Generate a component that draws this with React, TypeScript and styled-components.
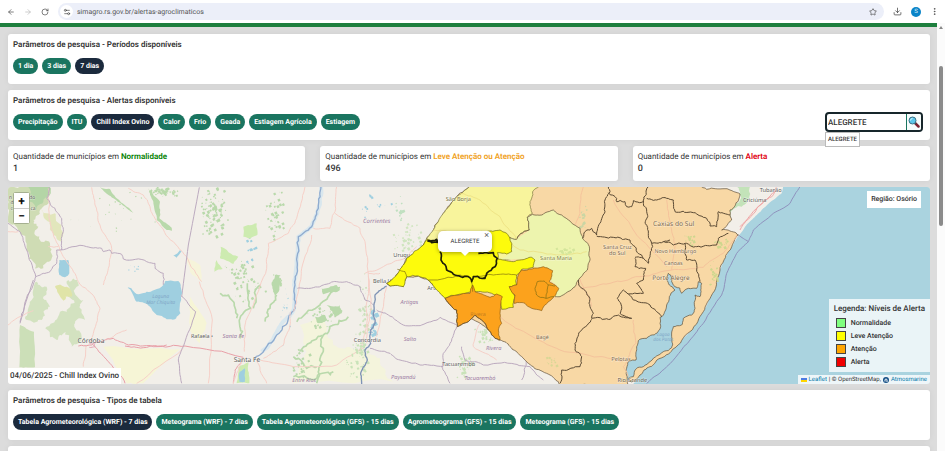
import React, { useState } from "react";
import styled, { createGlobalStyle, css } from "styled-components";
import { ArrowLeft, ArrowRight, RotateCw, Star, Download, EllipsisVertical, Settings2 } from "lucide-react";

const GlobalStyle = createGlobalStyle`
  * { box-sizing: border-box; }
  body { margin: 0; font-family: Roboto, "Liberation Sans", sans-serif; color: #333; background: #dcdcdc; overflow: hidden; text-rendering: geometricPrecision; }
  button, input { font-family: inherit; text-rendering: inherit; }
`;

const Window = styled.div`
  display: flex;
  flex-direction: column;
  height: 100vh;
  overflow: hidden;
`;

const BrowserBar = styled.header`
  display: flex;
  align-items: center;
  gap: 9px;
  flex: none;
  height: 23px;
  padding: 0 6px 0 7px;
  background: #fff;
  color: #444;
`;

const BarButton = styled.button<{ $dim?: boolean }>`
  display: flex;
  padding: 0;
  border: 0;
  background: none;
  color: ${(p) => (p.$dim ? "#b5b5b5" : "#444")};
`;

const AddressBar = styled.div`
  display: flex;
  flex: 1;
  align-items: center;
  gap: 4px;
  height: 17px;
  padding: 0 7px 0 2px;
  border-radius: 9px;
  background: #eceff9;
`;

const SiteInfo = styled.span`
  display: flex;
  align-items: center;
  justify-content: center;
  width: 13px;
  height: 13px;
  border-radius: 50%;
  background: #fff;
`;

const AddressInput = styled.input`
  flex: 1;
  min-width: 0;
  padding: 0;
  border: 0;
  outline: 0;
  background: none;
  color: #555;
  font-size: 7px;
`;

const Avatar = styled.span`
  display: flex;
  align-items: center;
  justify-content: center;
  width: 10px;
  height: 10px;
  border-radius: 50%;
  background: #0a84c8;
  color: #d5ecf8;
  font-size: 6px;
`;

const Viewport = styled.div`
  display: flex;
  flex: 1;
  min-height: 0;
`;

const Page = styled.main`
  display: flex;
  flex: 1;
  flex-direction: column;
  min-width: 0;
  overflow: hidden;
  border-top: 4px solid #1e7f3e;
`;

const Content = styled.div`
  display: flex;
  flex-direction: column;
  gap: 6px;
  padding: 7px 7px 0 8px;
`;

const Scrollbar = styled.div`
  display: flex;
  flex-direction: column;
  align-items: center;
  flex: none;
  width: 8px;
  padding-top: 3px;
  background: #fbfbfb;
`;

const ScrollArrow = styled.span`
  border: 2px solid transparent;
  border-top: 0;
  border-bottom: 3px solid #888;
`;

const ScrollThumb = styled.span`
  width: 4px;
  height: 160px;
  margin-top: 37px;
  border-radius: 2px;
  background: #8b8b8b;
`;

const panel = css`
  border-radius: 3px;
  background: #fff;
  box-shadow: 0 0 6px rgba(0, 0, 0, 0.06);
`;

const Card = styled.section`
  ${panel}
  display: flex;
  flex: none;
  flex-direction: column;
  gap: 7px;
  padding: 5px 7px 10px 5px;
`;

const Heading = styled.h2`
  margin: 0;
  font-size: 8px;
  font-weight: 600;
  line-height: 12px;
`;

const Row = styled.div`
  display: flex;
  align-items: center;
  justify-content: space-between;
  height: 16px;
`;

const PillGroup = styled.div`
  display: flex;
  gap: 4px;
`;

const Pill = styled.button<{ $active: boolean }>`
  height: 16px;
  padding: 0 5px;
  border: 0;
  border-radius: 8px;
  background: ${(p) => (p.$active ? "#1b2a3d" : "#1a7560")};
  color: #fff;
  font-size: 7px;
  font-weight: 700;
  line-height: 16px;
  white-space: nowrap;
`;

const Search = styled.div`
  position: relative;
  display: flex;
  width: 98px;
  height: 20px;
  border: 2px solid #17262b;
  border-radius: 4px;
  background: #fff;
`;

const SearchInput = styled.input`
  flex: 1;
  min-width: 0;
  padding: 0 1px;
  border: 0;
  outline: 0;
  background: none;
  color: #333;
  font-size: 8px;
  font-weight: 500;
`;

const SearchButton = styled.button`
  display: flex;
  align-items: center;
  justify-content: center;
  width: 15px;
  padding: 0;
  border: 0;
  border-left: 1px solid #1a7560;
  background: #f6fdfc;
  border-radius: 0 2px 2px 0;
`;

const Suggestion = styled.button`
  position: absolute;
  z-index: 2;
  top: 18px;
  left: -2px;
  height: 15px;
  padding: 0 2px;
  border: 1px solid #bbb;
  background: #fff;
  color: #333;
  font-size: 6px;
  font-weight: 500;
`;

const Stats = styled.div`
  display: grid;
  flex: none;
  grid-template-columns: repeat(3, 1fr);
  gap: 15px;
`;

const StatCard = styled.section`
  ${panel}
  padding: 5px 5px 6px;
`;

const StatLabel = styled.p`
  margin: 0;
  font-size: 8px;
  line-height: 12px;
  white-space: nowrap;
`;

const Level = styled.strong<{ $color: string }>`
  color: ${(p) => p.$color};
  font-weight: 600;
`;

const StatValue = styled.p`
  margin: 0;
  font-size: 9px;
  font-weight: 500;
  line-height: 12px;
`;

const MapFrame = styled.section`
  position: relative;
  flex: none;
  height: 197px;
  overflow: hidden;
  border-radius: 3px;
  background: #f2efe9;
`;

const MapDrawing = styled.svg`
  display: block;
  width: 100%;
  height: 100%;
`;

const ZoomControl = styled.div`
  position: absolute;
  top: 6px;
  left: 6px;
  display: flex;
  flex-direction: column;
  border-radius: 2px;
  box-shadow: 0 0 0 1px rgba(0, 0, 0, 0.2);
`;

const ZoomButton = styled.button`
  width: 15px;
  height: 15px;
  padding: 0;
  border: 0;
  background: #fff;
  color: #111;
  font-size: 12px;
  font-weight: 700;
  line-height: 14px;

  & + & { border-top: 1px solid #ccc; }
`;

const Popup = styled.div`
  position: absolute;
  top: 44px;
  left: 430px;
  display: flex;
  align-items: center;
  justify-content: center;
  width: 54px;
  height: 21px;
  border-radius: 5px;
  background: #fff;
  box-shadow: 0 1px 4px rgba(0, 0, 0, 0.35);
  font-size: 6px;

  &::after {
    content: "";
    position: absolute;
    top: 100%;
    border: 4px solid transparent;
    border-top-color: #fff;
    border-bottom: 0;
  }
`;

const PopupClose = styled.button`
  position: absolute;
  top: 1px;
  right: 3px;
  padding: 0;
  border: 0;
  background: none;
  color: #666;
  font-size: 9px;
  line-height: 9px;
`;

const MapTag = styled.div<{ $corner: "region" | "date" }>`
  position: absolute;
  background: #fff;
  font-weight: 500;
  white-space: nowrap;
  ${(p) =>
    p.$corner === "region"
      ? css`top: 4px; right: 9px; padding: 0 4px; font-size: 7px; line-height: 17px;`
      : css`bottom: 0; left: 0; padding: 0 2px; font-size: 8px; line-height: 16px;`}
`;

const Legend = styled.aside`
  position: absolute;
  right: 0;
  bottom: 12px;
  padding: 4px 5px 4px;
  background: rgba(255, 255, 255, 0.75);
`;

const LegendTitle = styled.h3`
  margin: 0 0 1px;
  font-size: 8px;
  font-weight: 500;
  line-height: 12px;
`;

const LegendItem = styled.div`
  display: flex;
  align-items: center;
  gap: 5px;
  height: 13px;
  padding-left: 2px;
  font-size: 7px;
  font-weight: 500;
`;

const Swatch = styled.span<{ $color: string }>`
  width: 10px;
  height: 10px;
  border: 1px solid #444;
  background: ${(p) => p.$color};
`;

const Attribution = styled.footer`
  position: absolute;
  right: 0;
  bottom: 0;
  display: flex;
  align-items: center;
  gap: 2px;
  height: 9px;
  padding: 0 3px;
  background: rgba(255, 255, 255, 0.8);
  font-size: 6px;
  white-space: nowrap;

  a { color: #0078a8; text-decoration: none; }
`;

/* ---- map geometry ---- */

type Point = [number, number];

const parse = (s: string): Point[] => s.trim().split(/\s+/).map((p) => p.split(",").map(Number) as Point);

const hash = (a: number, b: number) => {
  const v = Math.sin(a * 12.9898 + b * 78.233) * 43758.5453;
  return v - Math.floor(v) - 0.5;
};

/* Subdivides a line and nudges the middle points so it reads as a surveyed border. */
const roughen = (s: string, amp: number, close = false) => {
  const pts = parse(s);
  if (close) pts.push(pts[0]);
  const split = (a: Point, b: Point, depth: number): Point[] => {
    const len = Math.hypot(b[0] - a[0], b[1] - a[1]);
    if (depth === 0 || len < 8) return [b];
    const k = amp * Math.min(1, len / 30);
    const m: Point = [
      (a[0] + b[0]) / 2 + hash(a[0] + b[0], a[1] + b[1]) * k,
      (a[1] + b[1]) / 2 + hash(a[1] + b[1], a[0] + b[0]) * k,
    ];
    return [...split(a, m, depth - 1), ...split(m, b, depth - 1)];
  };
  const out: Point[] = [pts[0]];
  for (let i = 1; i < pts.length; i++) out.push(...split(pts[i - 1], pts[i], 3));
  return "M" + out.map(([x, y]) => `${x.toFixed(1)} ${y.toFixed(1)}`).join("L") + (close ? "Z" : "");
};

const Area = ({ d, fill, amp = 6, stroke, width = 3 }: { d: string; fill: string; amp?: number; stroke?: string; width?: number }) => (
  <path d={roughen(d, amp, true)} fill={fill} stroke={stroke} strokeWidth={stroke ? width : undefined} />
);

const Lines = ({ list, stroke, width = 3, amp = 6, opacity }: { list: string[]; stroke: string; width?: number; amp?: number; opacity?: number }) => (
  <g fill="none" stroke={stroke} strokeWidth={width} strokeLinejoin="round" opacity={opacity}>
    {list.map((d) => (
      <path key={d} d={roughen(d, amp)} />
    ))}
  </g>
);

const Specks = ({ x, y, rx, ry, n, fill, size = 6 }: { x: number; y: number; rx: number; ry: number; n: number; fill: string; size?: number }) => (
  <g fill={fill}>
    {Array.from({ length: n }, (_, i) => {
      const px = x + (hash(i, x) + hash(i + 9, y)) * rx;
      const py = y + (hash(i + 3, y) + hash(i + 5, x)) * ry;
      const r = size * (0.7 + hash(i, i + y));
      return <path key={i} d={`M${px} ${py}l${r} ${-r / 2}l${r / 2} ${r}l${-r} ${r / 2}z`} />;
    })}
  </g>
);

const WATER = "#aad3df";
const LAKE = "#9fcfe0";
const WOOD = "#b9d9ab";
const GRASS = "#cdebb0";
const ROAD = "#f6d0c8";
const MAIN_ROAD = "#e9a0a8";
const BORDER = "#bcaabf";
const DISTRICT = "#5b4a34";
const TAN = "#f8d8a5";
const YELLOW = "#fdfb0c";
const ORANGE = "#fca21c";

const CityLabel = styled.text`
  font-family: "Noto Sans", "Open Sans", sans-serif;
  text-anchor: middle;
  paint-order: stroke;
`;

const City = ({ x, y, size = 18, fill = "#5a5a5a", children }: { x: number; y: number; size?: number; fill?: string; children: string }) => (
  <CityLabel x={x} y={y} fontSize={size} fill={fill} stroke="rgba(255,255,255,.45)" strokeWidth={3}>
    {children}
  </CityLabel>
);

const Province = ({ x, y, size = 18, fill = "#9b7ba3", children }: { x: number; y: number; size?: number; fill?: string; children: string }) => (
  <CityLabel x={x} y={y} fontSize={size} fill={fill} fontStyle="italic">
    {children}
  </CityLabel>
);

const NorthWest = () => (
  <g transform="translate(0 405)">
    <Area fill="#cfdcb4" amp={16} d="24,157 150,157 140,180 140,210 120,225 115,240 100,255 115,275 105,300 150,325 155,370 130,400 105,400 85,350 60,290 24,260" />
    <Area fill="#b4d5a6" amp={14} d="85,157 150,157 130,200 110,225 90,200" />
    <Area fill="#e2e6bc" amp={14} d="125,222 165,235 188,290 185,320 160,300 150,262" />
    <Area fill={LAKE} d="178,375 205,375 208,415 195,427 178,420" />
    <Area fill={LAKE} d="520,362 540,345 545,350 530,368" />
    <Area fill={WOOD} d="300,157 330,162 350,190 400,234 375,215 340,190" />
    <Area fill={WOOD} d="445,160 480,200 478,250 515,278 515,288 500,285 470,255 460,200" />
    <Area fill={GRASS} d="662,335 715,365 700,387 660,370" />
    <Area fill={GRASS} d="730,275 770,265 772,300 750,312 730,305" />
    <Area fill={GRASS} d="650,375 668,402 643,410" />
    <Area fill="#f6f4da" d="560,365 600,390 605,440 570,410" />
    <Specks x={640} y={235} rx={42} ry={85} n={110} fill={WOOD} />
    <Specks x={820} y={240} rx={30} ry={80} n={44} fill={WOOD} />
    <Specks x={490} y={170} rx={50} ry={16} n={50} fill={WOOD} />
    <Specks x={715} y={405} rx={50} ry={40} n={30} fill={WOOD} />
    <Specks x={830} y={435} rx={20} ry={18} n={20} fill={WOOD} />
    <Specks x={750} y={350} rx={20} ry={50} n={12} fill={LAKE} />
    <Specks x={350} y={240} rx={180} ry={80} n={20} fill={WOOD} size={3} />
    <Specks x={400} y={400} rx={20} ry={50} n={8} fill={LAKE} size={3} />
    <Lines
      stroke={ROAD}
      list={[
        "275,157 285,210 300,270 335,340 325,400 310,450",
        "385,160 430,180 450,215 470,260 520,320 560,365 605,440",
        "145,160 150,260 175,330 200,380 235,440",
        "24,290 55,290",
        "145,335 175,335",
      ]}
    />
    <Lines
      stroke={BORDER}
      list={[
        "24,265 60,290 85,360 107,425 150,410 170,385 170,345 250,332 305,340 310,350 330,345 335,355 365,358 370,372 440,380 465,385 465,400 490,415 490,450",
        "148,157 140,190 165,220 185,250 190,290 185,345",
        "107,425 90,470 60,560",
      ]}
    />
    <Lines stroke={BORDER} amp={0} list={["598,157 565,330 545,485"]} />
    <City x={32} y={191} size={15}>n</City>
    <City x={97} y={191} size={15}>do</City>
    <City x={36} y={208} size={15}>d</City>
    <City x={35} y={225} size={12}>C</City>
    <City x={99} y={225} size={15}>ca</City>
  </g>
);

const Cordoba = () => (
  <g transform="translate(0 840)">
    <Area fill="#f6f5d6" d="310,200 540,208 430,310 380,310" />
    <Area fill="#f6f5d6" d="570,50 620,130 600,190 570,150" />
    <Area fill="#ccdfb8" amp={4} d="60,135 102,155 105,262 58,262" />
    <Area fill="#d3e2c0" amp={18} d="75,115 125,120 135,90 150,80 130,50 140,20 110,5 95,60" />
    <Area fill="#d3e2c0" amp={22} d="140,140 150,172 180,165 200,150 215,200 235,190 225,130 255,120 250,60 230,20 225,0 205,0 200,40 220,60 180,95" />
    <Area fill="#e0e4a8" amp={14} d="165,20 200,20 215,50 190,62" />
    <Area fill={LAKE} amp={8} d="383,22 410,42 440,35 490,15 495,4 535,3 542,20 541,100 525,118 500,118 470,105 450,80 435,70 410,65" />
    <Lines stroke={ROAD} list={["235,5 285,55 300,85 280,160 270,190", "24,135 60,110 100,92", "258,195 250,260", "598,5 637,120 625,310", "550,205 410,310", "320,180 345,165 380,150"]} />
    <Lines stroke={MAIN_ROAD} list={["235,198 275,195 340,175 385,195 460,200 555,198 730,232", "375,198 430,203 500,195", "280,195 330,250 375,310", "730,235 705,270 700,310"]} />
    <Lines stroke={BORDER} amp={3} list={["100,0 60,130", "545,48 587,95 550,200 535,240 545,310"]} />
    <Lines stroke="#e3a5b5" list={["268,190 282,190 285,200 268,202"]} />
    <Province x={482} y={54} size={15} fill="#7fa6c6">Laguna</Province>
    <Province x={482} y={72} size={15} fill="#7fa6c6">Mar Chiquita</Province>
    <City x={273} y={188} size={20}>Córdoba</City>
    <City x={606} y={174} size={16}>Rafaela •</City>
  </g>
);

const SantaFe = () => (
  <g transform="translate(480 555)">
    <Area fill="#f4f4dc" amp={14} d="420,420 480,400 520,480 600,500 660,520 700,590 400,595 440,500" />
    <Area fill={GRASS} d="235,545 265,530 268,595 230,595" />
    <Area fill={LAKE} d="240,560 255,550 255,590 238,590" />
    <Lines stroke={WOOD} width={5} amp={16} list={["470,595 480,520 490,450 520,420 565,395", "410,410 480,360 540,308", "262,295 272,370 240,400 240,460", "180,325 205,330 230,400", "300,300 280,370", "350,330 330,370 315,410", "400,515 440,550 470,545", "400,575 470,580 520,560", "485,450 440,480 420,500"]} />
    <Area fill={WOOD} amp={10} d="345,270 362,270 358,310 345,335 335,300" />
    <Area fill={WOOD} amp={12} d="500,360 540,360 545,385 525,395" />
    <Area fill={WOOD} amp={12} d="485,310 530,300 540,315 490,328" />
    <Area fill={WOOD} amp={12} d="465,395 495,390 495,410 475,415" />
    <Specks x={480} y={395} rx={50} ry={40} n={30} fill={WOOD} />
    <Specks x={420} y={540} rx={40} ry={50} n={30} fill={WOOD} />
    <Specks x={265} y={310} rx={60} ry={50} n={24} fill={WOOD} />
    <Specks x={610} y={400} rx={20} ry={140} n={50} fill="#c9e1bb" />
    <Specks x={375} y={370} rx={20} ry={120} n={24} fill={LAKE} size={3} />
    <Lines stroke="#d9e7ee" width={12} list={["483,5 475,70 455,125 415,155 410,240 402,300 402,370 380,400 345,450 305,500"]} />
    <Lines stroke="#8fabcf" width={4} amp={10} list={["483,5 475,70 455,125 415,155 412,240 405,300 405,370 385,400 350,450 310,500 285,522"]} />
    <Lines
      stroke={ROAD}
      list={[
        "435,5 410,100 385,145 325,175 320,250 280,360 255,420 253,500",
        "530,5 525,80 510,130 460,130",
        "525,85 600,130 615,170 625,270 620,420 600,500",
        "455,150 425,250 415,320 400,380",
        "392,380 390,420 370,480 310,520",
        "300,525 400,545 530,540 610,490",
        "220,595 250,520",
        "290,530 320,595",
        "625,265 660,265",
      ]}
    />
    <Lines stroke={BORDER} list={["412,310 450,310 490,300 520,290 560,290 600,305 615,345 640,360"]} />
    <Province x={220} y={458} size={17}>Santa Fe</Province>
    <City x={261} y={532} size={20}>Santa Fe</City>
    <Province x={432} y={590} size={16}>Entre Ríos</Province>
  </g>
);

const Uruguay = () => (
  <g transform="translate(1020 540)">
    <Specks x={200} y={180} rx={50} ry={60} n={50} fill="#cfe5bf" />
    <Specks x={180} y={100} rx={20} ry={60} n={14} fill="#c0e0c0" />
    <Specks x={90} y={70} rx={80} ry={50} n={16} fill={LAKE} size={5} />
    <Specks x={55} y={540} rx={40} ry={80} n={60} fill="#c9e3b9" />
    <Specks x={430} y={455} rx={30} ry={40} n={36} fill="#c9e3b9" />
    <Specks x={370} y={560} rx={30} ry={50} n={40} fill="#c9e3b9" />
    <Specks x={95} y={430} rx={14} ry={60} n={20} fill={LAKE} size={9} />
    <Lines stroke={ROAD} list={["85,290 90,400 80,490", "75,280 130,260 180,240 230,200", "140,320 125,400 110,470", "400,500 410,450 430,400", "400,500 470,540"]} />
    <Lines
      stroke={BORDER}
      list={[
        "110,390 145,405 190,435 245,435 300,412 350,435",
        "90,505 150,520 180,540 240,555 310,560",
        "350,440 330,490 310,520 305,560 330,610",
        "365,500 375,540 430,555 510,550 570,560 610,600",
        "500,480 540,500 560,540 545,600",
      ]}
    />
    <Lines stroke="#7f93b5" width={4} list={["140,318 105,345 100,400 105,430 92,450 92,490 75,510 82,540 62,580 65,612"]} />
    <Province x={110} y={128}>Corrientes</Province>
    <Province x={208} y={371} size={17}>Artigas</Province>
    <Province x={210} y={484} size={17}>Salto</Province>
    <Province x={461} y={510} size={17}>Rivera</Province>
    <Province x={190} y={597} size={17}>Paysandú</Province>
    <Province x={420} y={601} size={17}>Tacuarembó</Province>
    <City x={82} y={487} size={17}>Concordia</City>
    <City x={356} y={558} size={17}>Tacuarembó</City>
    <City x={207} y={231} size={17}>Uruguaiana</City>
    <City x={145} y={309} size={17}>Bella Unión</City>
    <City x={290} y={330} size={17}>Artigas</City>
  </g>
);

const Ocean = () => (
  <g transform="translate(1920 540)">
    <Area fill={WATER} amp={3} d="430,15 425,40 400,60 370,85 340,115 315,140 295,168 265,215 240,270 218,340 190,395 150,455 98,508 60,535 30,560 0,585 -25,618 900,618 900,15" />
    <Area fill="#c3e3b9" amp={12} d="290,20 330,20 328,50 305,80 275,92 270,130 262,90 300,60" />
    <Lines stroke="#eea6a6" list={["410,20 395,50 350,85 300,150", "410,30 360,75 300,140"]} width={3} />
    <Lines stroke="#8f92bd" amp={3} list={["480,20 450,70 400,100 340,150 325,185 290,220 260,280 245,345 190,430 150,480 80,560 20,610", "295,165 325,185"]} />
  </g>
);

const RioGrandeDoSul = () => (
  <g transform="translate(1500 540)">
    <Area fill={WATER} amp={0} d="495,270 615,295 610,360 590,410 530,500 400,600 370,600 370,530 470,400" />
    <Area
      fill={TAN}
      stroke={DISTRICT}
      amp={7}
      width={2}
      d="-82,15 595,15 620,28 690,30 720,42 715,62 690,90 695,120 665,150 690,153 715,165 685,215 660,270 638,340 610,395 570,455 518,508 480,535 450,560 420,585 395,606 385,595 400,590 410,565 430,560 450,545 490,515 515,503 518,495 515,470 520,440 545,435 550,415 575,405 585,385 585,345 600,350 605,310 595,305 590,325 565,325 545,340 540,325 525,320 515,305 512,285 505,280 500,295 508,315 525,330 508,350 500,375 490,405 480,412 482,440 470,460 440,475 415,482 410,500 408,540 385,545 378,570 385,618 180,618 175,605 150,585 100,560 75,540 50,515 30,500 0,480 -100,400 -128,400 -130,390 -215,300 -245,288 -280,290 -290,320 -330,318 -340,310 -305,278 -295,262 -280,235 -230,195 -200,150 -170,100 -150,75 -130,50"
    />
    <Specks x={245} y={105} rx={14} ry={50} n={18} fill="#c9d6a4" />
    <Specks x={155} y={545} rx={30} ry={22} n={14} fill="#d8d795" />
    <Specks x={570} y={180} rx={20} ry={16} n={18} fill="#cdd78e" />
    <Specks x={660} y={190} rx={26} ry={16} n={18} fill="#cdd78e" />
    <Specks x={635} y={280} rx={16} ry={50} n={16} fill="#cdd78e" />
    <Lines
      stroke="#f5c39c"
      list={[
        "250,20 240,100 200,200 250,320 275,380",
        "0,410 80,460 180,510 300,530 365,545",
        "400,420 408,490 370,560 385,590",
        "240,325 330,310 420,290 515,270 610,262",
        "500,60 515,150 525,200 515,270",
        "610,262 670,220 710,165",
        "340,60 400,150 500,260",
      ]}
    />
    <Area fill="#f8f49c" stroke="#77723e" width={2} d="-82,15 125,15 98,35 90,65 97,100 82,112 88,150 60,163 50,178 25,172 30,200 40,235 0,240 -100,220 -230,195 -200,150 -170,100 -150,75 -130,50" />
    <Area fill="#edf4ae" d="97,103 125,105 160,90 185,105 240,145 248,175 268,200 270,240 262,270 235,300 225,320 180,350 165,350 175,325 150,300 155,270 100,260 90,235 0,240 35,215 20,175 50,178 88,150 82,112" />
    <Lines
      stroke={DISTRICT}
      width={2}
      list={["15,165 25,172 50,178 60,163 88,150 82,112 97,103 125,105 160,90 185,105 240,145 248,175 268,200 270,240 262,270 235,300 225,320 180,350 165,350"]}
    />
    <Lines stroke="#eadb7c" width={2} list={["-200,150 -100,160 20,175 60,210 170,225 260,215", "-120,40 -60,60 0,110 50,178"]} />
    <Specks x={200} y={215} rx={36} ry={16} n={24} fill="#d3e59a" />
    <Lines
      stroke={DISTRICT}
      amp={9}
      list={[
        "325,20 330,35 315,60 315,95 300,130 290,165",
        "290,165 275,145 260,150 248,175",
        "325,38 345,50 350,65 375,65 380,80 395,80 400,62 432,65",
        "290,168 340,172 390,180 405,200 430,235 445,250 450,230 455,190 490,185 510,180",
        "445,20 430,60 440,95 435,130 445,160 455,190",
        "405,235 405,260 437,265 430,300 410,310 430,340 385,342 370,330 352,355 365,380 360,400 395,415",
        "430,235 405,232",
        "385,342 400,360 450,375 470,395 485,410",
        "235,300 245,325 260,340 270,380 280,400 275,415 330,418 355,405 395,415",
        "275,418 245,450 230,480 225,510 245,530 240,560 185,570 180,610",
        "440,55 470,60 500,55 520,60 525,95 580,98 620,115 630,138 650,140 655,95 690,105",
        "490,185 520,195 560,190 590,200 650,195 655,175 685,160",
        "555,190 560,240 585,240 590,270 600,305",
      ]}
    />
    <City x={168} y={241} size={17} fill="#84813f">Santa Maria</City>
    <City x={352} y={206} size={17} fill="#7c6648">Santa Cruz</City>
    <City x={352} y={225} size={17} fill="#7c6648">do Sul</City>
    <City x={127} y={476} size={16} fill="#7c6648">Bagé</City>
    <City x={363} y={544} size={17} fill="#7c6648">Pelotas</City>
    <City x={397} y={607} size={17} fill="#665a4a">Rio Grande</City>
    <City x={521} y={138} size={20} fill="#7c6648">Caxias do Sul</City>
    <City x={526} y={220} size={16} fill="#7c6648">Novo Hamburgo</City>
    <City x={520} y={255} size={16} fill="#7c6648">Canoas</City>
    <City x={513} y={300} size={19} fill="#7c6648">Porto Alegre</City>
    <City x={764} y={66} size={17}>Criciúma</City>
    <City x={812} y={36} size={17}>Tubarão</City>
    <City x={-125} y={63} size={17} fill="#77723e">São Borja</City>
    <Province x={490} y={467} size={14} fill="#7fa6c6">Lagoa</Province>
    <Province x={490} y={484} size={14} fill="#7fa6c6">dos Patos</Province>
  </g>
);

const AlertAreas = () => (
  <g transform="translate(1020 540)">
    <Area
      fill={YELLOW}
      stroke="#6b6a12"
      width={2}
      d="262,178 295,180 300,200 310,160 440,155 480,150 500,160 515,190 515,215 500,222 472,218 475,238 520,245 540,240 575,232 585,240 580,262 545,268 530,285 530,315 508,320 525,350 520,382 485,388 480,350 455,340 400,335 315,355 290,330 265,300 235,288 200,290 190,320 150,318 140,310 175,278 185,262 200,235 250,195"
    />
    <Area fill={ORANGE} stroke="#8a5a10" width={2} d="315,355 390,340 398,315 405,335 450,352 470,342 487,350 480,400 485,430 475,450 480,480 465,475 445,450 430,425 405,405 385,425 352,440 350,390" />
    <Area fill={ORANGE} stroke="#8a5a10" width={2} d="535,285 545,270 610,260 638,272 628,305 645,315 656,325 642,350 625,365 605,392 575,385 555,370 522,370 525,345 508,320 530,315" />
    <Lines stroke="#7a6a10" width={2} list={["172,268 195,275 200,290", "265,300 360,285 385,290", "400,290 460,285 530,285", "395,305 398,335", "585,325 592,305 612,303 625,315 645,318", "585,325 590,345 618,355 625,315", "618,355 642,350"]} />
    <Lines stroke="#1d1d08" width={5} amp={10} list={["300,215 303,240 320,270 345,285 385,290 395,305 400,290 435,295 440,280 465,260 472,235 460,218 415,220", "262,182 290,178 295,187 275,188 262,182"]} />
    <Lines stroke={DISTRICT} width={2} list={["315,355 350,390 352,440 385,425 405,405 430,425 445,450 465,475 480,480"]} />
    <CityLabel x={414} y={408} fontSize={16} fill="#c67d1c">Rivera</CityLabel>
  </g>
);

const RegionMap = () => (
  <MapDrawing viewBox="24 561 2766 591" preserveAspectRatio="xMidYMid slice" role="img" aria-label="Mapa de alertas por município">
    <NorthWest />
    <Cordoba />
    <SantaFe />
    <Uruguay />
    <Ocean />
    <RioGrandeDoSul />
    <AlertAreas />
  </MapDrawing>
);

const MagnifierIcon = () => (
  <svg width="12" height="12" viewBox="0 0 24 24" aria-hidden="true">
    <path d="M14 14L21 21" stroke="#7c2230" strokeWidth="5" strokeLinecap="round" />
    <path d="M13 13L16 16" stroke="#444" strokeWidth="3" />
    <circle cx="9" cy="9" r="7" fill="#5cc8ea" stroke="#3a7186" strokeWidth="2" />
    <path d="M5 9A4 4 0 0 1 9 5" stroke="#d4f4ff" strokeWidth="2" fill="none" />
  </svg>
);

const FlagIcon = () => (
  <svg width="6" height="4" viewBox="0 0 12 8" aria-hidden="true">
    <path fill="#4c7be1" d="M0 0h12v4H0z" />
    <path fill="#ffd500" d="M0 4h12v4H0z" />
  </svg>
);

const AtmosIcon = () => (
  <svg width="6" height="6" viewBox="0 0 12 12" aria-hidden="true">
    <circle cx="6" cy="6" r="6" fill="#144f86" />
    <path d="M4 9V6a2 2 0 0 1 4 0v4" stroke="#fff" strokeWidth="2" fill="none" />
  </svg>
);

const PERIODS = ["1 dia", "3 dias", "7 dias"];
const ALERTS = ["Precipitação", "ITU", "Chill Index Ovino", "Calor", "Frio", "Geada", "Estiagem Agrícola", "Estiagem"];
const TABLES = [
  "Tabela Agrometeorológica (WRF) - 7 dias",
  "Meteograma (WRF) - 7 dias",
  "Tabela Agrometeorológica (GFS) - 15 dias",
  "Agrometeograma (GFS) - 15 dias",
  "Meteograma (GFS) - 15 dias",
];
const STATS = [
  { level: "Normalidade", color: "#008000", value: 1 },
  { level: "Leve Atenção ou Atenção", color: "#f0a020", value: 496 },
  { level: "Alerta", color: "#e00010", value: 0 },
];
const LEGEND = [
  { label: "Normalidade", color: "#80ff80" },
  { label: "Leve Atenção", color: "#ffff00" },
  { label: "Atenção", color: "#ffa500" },
  { label: "Alerta", color: "#f00000" },
];

const Pills = ({ options, initial }: { options: string[]; initial: string }) => {
  const [selected, setSelected] = useState(initial);
  return (
    <PillGroup>
      {options.map((o) => (
        <Pill key={o} type="button" $active={o === selected} aria-pressed={o === selected} onClick={() => setSelected(o)}>
          {o}
        </Pill>
      ))}
    </PillGroup>
  );
};

export default function App() {
  const [query, setQuery] = useState("ALEGRETE");
  return (
    <Window>
      <GlobalStyle />
      <BrowserBar>
        <BarButton aria-label="Voltar"><ArrowLeft size={8} /></BarButton>
        <BarButton aria-label="Avançar" $dim><ArrowRight size={8} /></BarButton>
        <BarButton aria-label="Recarregar"><RotateCw size={8} /></BarButton>
        <AddressBar>
          <SiteInfo><Settings2 size={8} /></SiteInfo>
          <AddressInput aria-label="Endereço" defaultValue="simagro.rs.gov.br/alertas-agroclimaticos" />
          <BarButton aria-label="Favoritar"><Star size={8} /></BarButton>
        </AddressBar>
        <BarButton aria-label="Downloads"><Download size={9} /></BarButton>
        <Avatar>S</Avatar>
        <BarButton aria-label="Menu"><EllipsisVertical size={9} /></BarButton>
      </BrowserBar>
      <Viewport>
        <Page>
          <Content>
            <Card>
              <Heading>Parâmetros de pesquisa - Períodos disponíveis</Heading>
              <Pills options={PERIODS} initial="7 dias" />
            </Card>
            <Card>
              <Heading>Parâmetros de pesquisa - Alertas disponíveis</Heading>
              <Row>
                <Pills options={ALERTS} initial="Chill Index Ovino" />
                <Search>
                  <SearchInput aria-label="Município" value={query} onChange={(e) => setQuery(e.target.value)} autoFocus />
                  <SearchButton aria-label="Buscar"><MagnifierIcon /></SearchButton>
                  <Suggestion type="button">ALEGRETE</Suggestion>
                </Search>
              </Row>
            </Card>
            <Stats>
              {STATS.map((s) => (
                <StatCard key={s.level}>
                  <StatLabel>Quantidade de municípios em <Level $color={s.color}>{s.level}</Level></StatLabel>
                  <StatValue>{s.value}</StatValue>
                </StatCard>
              ))}
            </Stats>
            <MapFrame>
              <RegionMap />
              <ZoomControl>
                <ZoomButton aria-label="Aproximar">+</ZoomButton>
                <ZoomButton aria-label="Afastar">−</ZoomButton>
              </ZoomControl>
              <Popup>ALEGRETE<PopupClose aria-label="Fechar">×</PopupClose></Popup>
              <MapTag $corner="region">Região: Osório</MapTag>
              <MapTag $corner="date">04/06/2025 - Chill Index Ovino</MapTag>
              <Legend>
                <LegendTitle>Legenda: Níveis de Alerta</LegendTitle>
                {LEGEND.map((l) => (
                  <LegendItem key={l.label}><Swatch $color={l.color} />{l.label}</LegendItem>
                ))}
              </Legend>
              <Attribution>
                <FlagIcon /><a href="#leaflet">Leaflet</a><span>| © OpenStreetMap,</span><AtmosIcon /><a href="#atmosmarine">Atmosmarine</a>
              </Attribution>
            </MapFrame>
            <Card>
              <Heading>Parâmetros de pesquisa - Tipos de tabela</Heading>
              <Pills options={TABLES} initial={TABLES[0]} />
            </Card>
            <Card />
          </Content>
        </Page>
        <Scrollbar><ScrollArrow /><ScrollThumb /></Scrollbar>
      </Viewport>
    </Window>
  );
}
